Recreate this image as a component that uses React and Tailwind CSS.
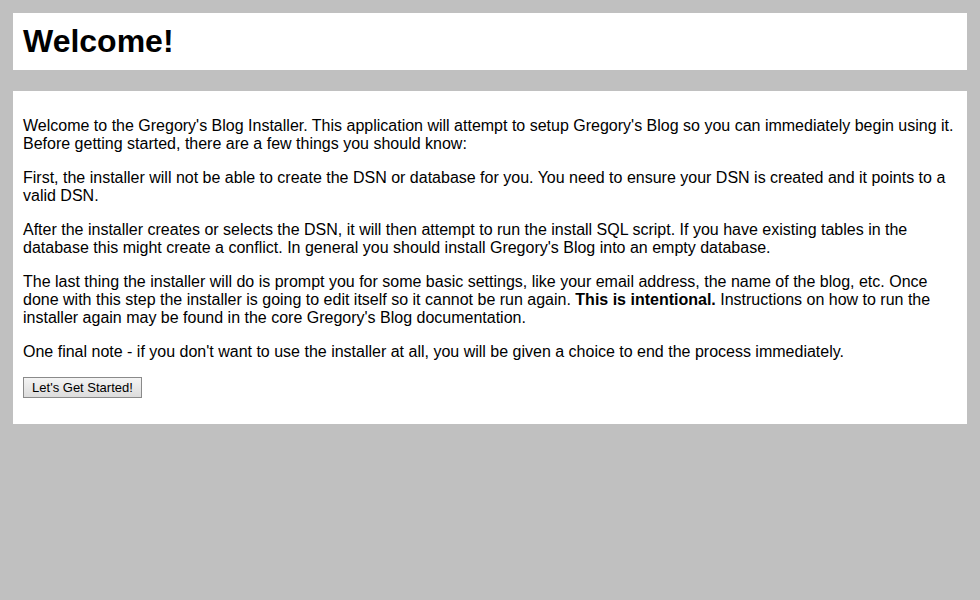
export default function App() {
  return (
    <div className="min-h-[600px] bg-[#c0c0c0] px-[13px] pt-[13px] pb-[13px] font-['Liberation_Sans',Arial,sans-serif] text-black text-[16px] leading-[normal]">
      {/* Header */}
      <div className="bg-white p-[10px]">
        <h1 className="text-[32px] font-bold leading-[37px]">Welcome!</h1>
      </div>

      {/* Installer intro */}
      <div className="bg-white p-[10px] mt-[21px]">
        <p className="my-4">
          Welcome to the Gregory's Blog Installer. This application will attempt to setup Gregory's Blog so you can immediately begin using it. Before getting started, there are a few things you should know:
        </p>
        <p className="my-4">
          First, the installer will not be able to create the DSN or database for you. You need to ensure your DSN is created and it points to a valid DSN.
        </p>
        <p className="my-4">
          After the installer creates or selects the DSN, it will then attempt to run the install SQL script. If you have existing tables in the database this might create a conflict. In general you should install Gregory's Blog into an empty database.
        </p>
        <p className="my-4">
          The last thing the installer will do is prompt you for some basic settings, like your email address, the name of the blog, etc. Once done with this step the installer is going to edit itself so it cannot be run again. <span className="font-bold">This is intentional.</span> Instructions on how to run the installer again may be found in the core Gregory's Blog documentation.
        </p>
        <p className="my-4">
          One final note - if you don't want to use the installer at all, you will be given a choice to end the process immediately.
        </p>
        <div className="my-4 flex">
          <button className="h-[21px] w-[119px] border border-[#8a8a8a] bg-gradient-to-b from-[#f4f4f4] to-[#dcdcdc] text-[13px] leading-none text-black">
            Let's Get Started!
          </button>
        </div>
      </div>
    </div>
  );
}
